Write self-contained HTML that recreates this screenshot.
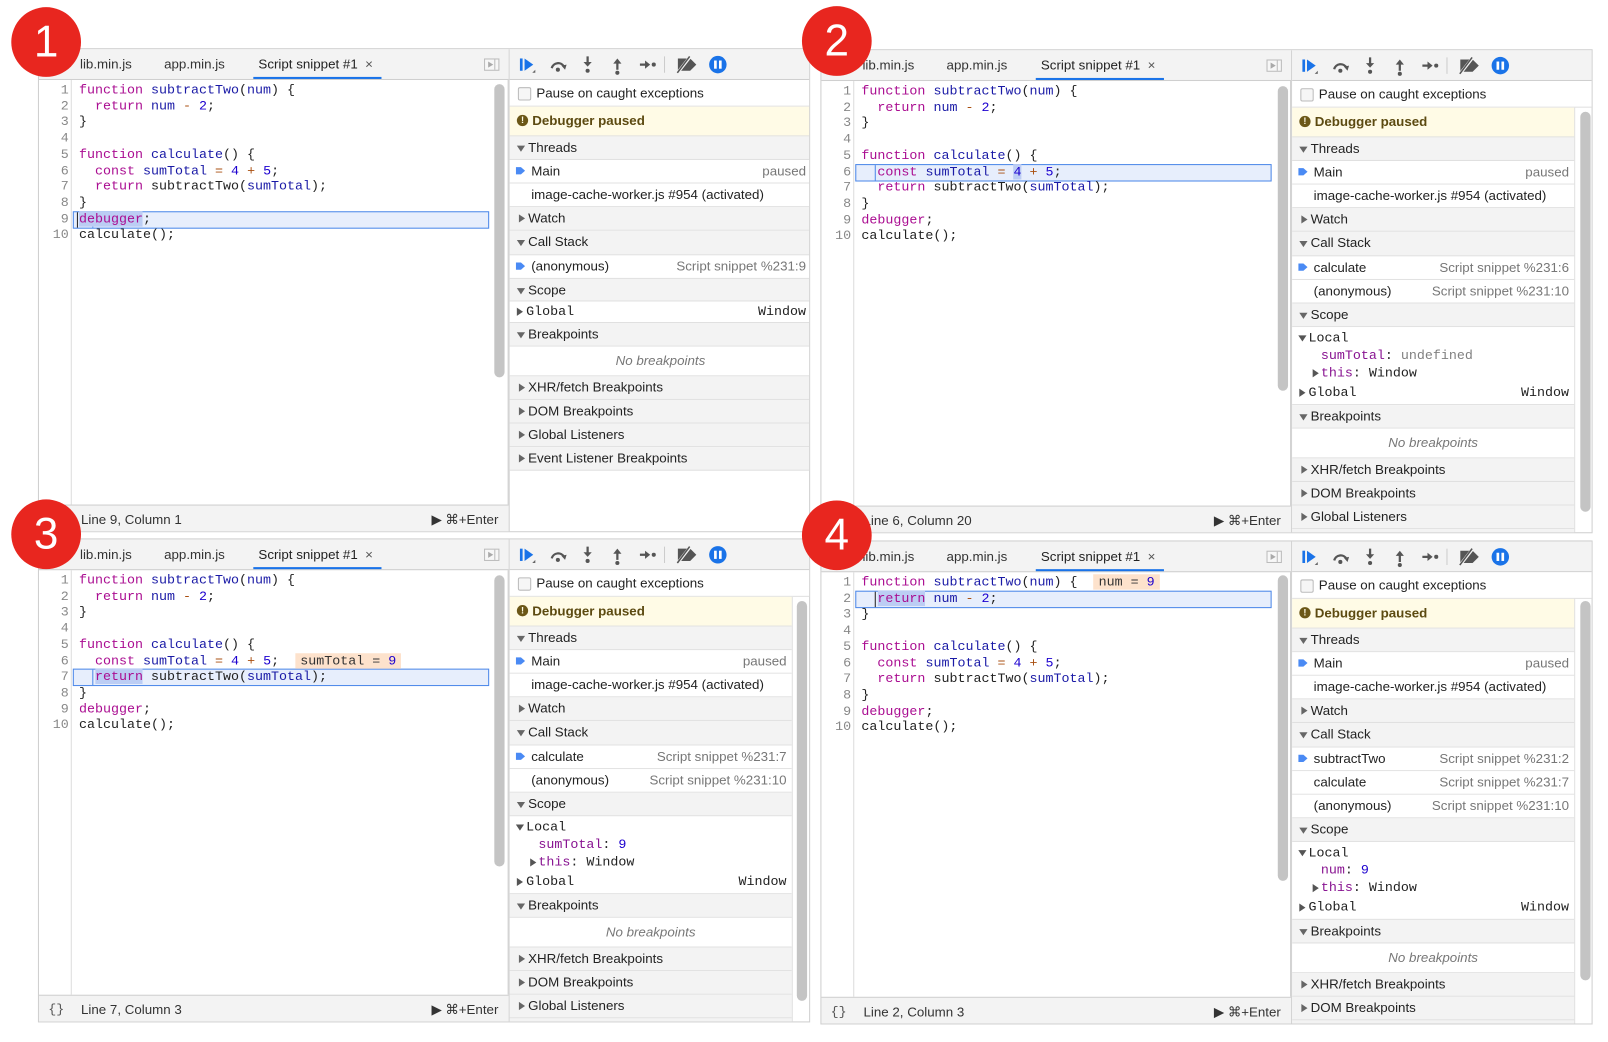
<!DOCTYPE html>
<html><head><meta charset="utf-8">
<style>
*{box-sizing:border-box;margin:0;padding:0}
html,body{width:1608px;height:1042px;overflow:hidden;background:#fff}
#w{position:absolute;left:0;top:0;width:1568px;height:1016px;transform:scale(1.02551);transform-origin:0 0;font-family:"Liberation Sans",Arial,sans-serif;font-size:13px;color:#222}
.p{position:absolute;width:753px;height:472px;border:1px solid #cfcfcf;background:#fff;overflow:hidden}
.tabs{position:absolute;left:0;top:0;width:458px;height:30px;background:#f3f3f3;border-bottom:1px solid #cfcfcf}
.tab{position:absolute;top:7px;color:#333;white-space:nowrap}
.tab.a{color:#222}
.ul{position:absolute;left:209px;top:27px;width:125px;height:2px;background:#1a73e8}
.tog{position:absolute;left:434px;top:9px;width:15px;height:12px;border:1px solid #bbb;background:#f7f7f7}
.tog:after{content:"";position:absolute;left:3px;top:2px;border-left:5px solid #aaa;border-top:3px solid transparent;border-bottom:3px solid transparent}
.tog:before{content:"";position:absolute;left:9px;top:0;width:1px;height:10px;background:#bbb}
.gut{position:absolute;left:0;top:30px;width:32px;height:414px;border-right:1px solid #ddd}
.ed{position:absolute;left:0;top:30px;width:458px;height:414px;border-right:1px solid #cfcfcf}
.ln{position:absolute;left:0;height:15.7px;width:456px;font-family:"Liberation Mono",monospace;font-size:13px;line-height:15.7px;white-space:pre;color:#222}
.ln b{font-weight:normal;position:absolute;left:0;width:29px;text-align:right;color:#888}
.ln span.c{position:absolute;left:39px}
.k{color:#aa0d91}.f{color:#1a1aa6}.n{color:#1c00cf}.o{color:#a94f10}
.hl{position:absolute;left:33px;width:406px;height:17px;background:#e7eefc;border:1px solid #4c88e9}
.hl i{position:absolute;top:0;width:1px;height:15px;background:#4c88e9}
.sel{background:#bccdf4}
.iv{background:#fde2cc;padding:0 5px;color:#333}
.sb{position:absolute;width:10px;background:#c4c4c4;border-radius:5px}
.st{position:absolute;left:0;top:444px;width:458px;height:28px;background:#f3f3f3;border-top:1px solid #cfcfcf;color:#333}
.st .br{position:absolute;left:9px;top:6px;font-family:"Liberation Mono",monospace;color:#555}
.st .t{position:absolute;left:41px;top:6px}
.st .r{position:absolute;right:10px;top:6px}
.side{position:absolute;left:458px;top:0;height:472px}
.tb{position:absolute;left:0;top:0;width:296px;height:30px;background:#f3f3f3;border-bottom:1px solid #cfcfcf}
.list{position:absolute;left:0;top:30px}
.row{position:relative;height:23px;line-height:22px;border-bottom:1px solid #e0e0e0;white-space:nowrap;background:#fff}
.h{background:#f3f3f3;padding-left:18px}
.h:before{content:"";position:absolute;left:7px;top:9px;border-top:6px solid #666;border-left:4px solid transparent;border-right:4px solid transparent}
.h.c:before{left:9px;top:7px;border-left:6px solid #666;border-top:4px solid transparent;border-bottom:4px solid transparent;border-right:0}
.it{padding-left:21px}
.it .rt{position:absolute;right:5px;top:0;color:#777}
.arr{position:absolute;left:6px;top:6px;width:9px;height:9px}
.chk{height:26px;line-height:25px;padding-left:26px;border-bottom:1px solid #e0e0e0}
.chk:before{content:"";position:absolute;left:8px;top:7px;width:11px;height:11px;border:1px solid #bbb;border-radius:2px;background:#f6f6f6}
.pz{height:29px;line-height:28px;background:#fffbe6;color:#5c4a11;font-weight:bold;padding-left:22px;border-bottom:1px solid #e0e0e0}
.pz:before{content:"!";position:absolute;left:7px;top:8px;width:11px;height:11px;border-radius:50%;background:#6b5717;color:#fffbe6;font-size:9px;line-height:11px;text-align:center}
.nb{height:29px;line-height:28px;text-align:center;font-style:italic;color:#777}
.mono{font-family:"Liberation Mono",monospace;font-size:13px}
.scope{position:relative;background:#fff;border-bottom:1px solid #e0e0e0;padding-top:2px}
.sl{position:relative;height:17px;line-height:17px;white-space:nowrap;font-family:"Liberation Mono",monospace}
.tr{position:absolute;border-left:6px solid #555;border-top:4px solid transparent;border-bottom:4px solid transparent}
.td{position:absolute;border-top:6px solid #555;border-left:4px solid transparent;border-right:4px solid transparent}
.m{color:#881391}.g{color:#808080}
.circ{position:absolute;width:68px;height:68px;border-radius:50%;background:#e8261f;color:#fff;font-size:43px;line-height:68px;text-align:center;z-index:5;font-family:"Liberation Sans",Arial,sans-serif}
</style></head><body><div id="w">

<!-- PANEL 1 -->
<div class="p" style="left:37px;top:47px">
 <div class="tabs"><span class="tab" style="left:40px">lib.min.js</span><span class="tab" style="left:122px">app.min.js</span><span class="tab a" style="left:214px">Script snippet #1 &nbsp;<span style="color:#555">×</span></span><div class="ul"></div><div class="tog"></div></div>
 <div class="ed"></div><div class="gut"></div>
 <div class="hl" style="top:158px"><i style="left:3px;background:#222"></i><i style="left:18px"></i></div>
 <div class="ln" style="top:32px"><b>1</b><span class="c"><span class="k">function</span> <span class="f">subtractTwo</span>(<span class="f">num</span>) {</span></div>
 <div class="ln" style="top:47.7px"><b>2</b><span class="c">  <span class="k">return</span> <span class="f">num</span> <span class="o">-</span> <span class="n">2</span>;</span></div>
 <div class="ln" style="top:63.4px"><b>3</b><span class="c">}</span></div>
 <div class="ln" style="top:79.1px"><b>4</b></div>
 <div class="ln" style="top:94.8px"><b>5</b><span class="c"><span class="k">function</span> <span class="f">calculate</span>() {</span></div>
 <div class="ln" style="top:110.5px"><b>6</b><span class="c">  <span class="k">const</span> <span class="f">sumTotal</span> <span class="o">=</span> <span class="n">4</span> <span class="o">+</span> <span class="n">5</span>;</span></div>
 <div class="ln" style="top:126.2px"><b>7</b><span class="c">  <span class="k">return</span> subtractTwo(<span class="f">sumTotal</span>);</span></div>
 <div class="ln" style="top:141.9px"><b>8</b><span class="c">}</span></div>
 <div class="ln" style="top:157.6px"><b>9</b><span class="c"><span class="k sel">debugger</span>;</span></div>
 <div class="ln" style="top:173.3px"><b>10</b><span class="c">calculate();</span></div>
 <div class="sb" style="left:444px;top:34px;height:286px"></div>
 <div class="st"><span class="br">{}</span><span class="t">Line 9, Column 1</span><span class="r">▶ ⌘+Enter</span></div>
 <div class="side" style="width:295px;border-left:1px solid #cfcfcf">
  <div class="tb"><svg width="296" height="30" viewBox="0 0 296 30"><g fill="#1a73e8"><rect x="10" y="9" width="2.6" height="12"/><polygon points="14.5,9 23,15 14.5,21"/></g><polygon points="22,23 25,20 25,23" fill="#666"/><path d="M41 18.5 A6.5 6.5 0 0 1 53 17" stroke="#555" stroke-width="2.2" fill="none"/><polygon points="50.5,16 55.5,15 54,20" fill="#555"/><circle cx="47" cy="20" r="2" fill="#555"/><path d="M76 7 V14" stroke="#555" stroke-width="2.2"/><polygon points="72,12.5 80,12.5 76,17" fill="#555"/><circle cx="76" cy="21" r="2" fill="#555"/><path d="M105 13 V20" stroke="#555" stroke-width="2.2"/><polygon points="101,14 109,14 105,9" fill="#555"/><circle cx="105" cy="23" r="2" fill="#555"/><path d="M127 15 H133" stroke="#555" stroke-width="2.2"/><polygon points="132,11 137,15 132,19" fill="#555"/><circle cx="140.5" cy="15" r="2" fill="#555"/><path d="M151 7 V23" stroke="#ccc"/><polygon points="164,9 176,9 182,15 176,21 164,21" fill="#555"/><path d="M163 24 L177 6" stroke="#f3f3f3" stroke-width="3"/><path d="M163.5 23 L175.5 7" stroke="#555" stroke-width="1.5"/><circle cx="203" cy="15" r="8.5" fill="#1a73e8"/><rect x="199.3" y="11" width="2.6" height="8" fill="#fff"/><rect x="204.1" y="11" width="2.6" height="8" fill="#fff"/></svg></div>
  <div class="list" style="width:294px">
   <div class="row chk">Pause on caught exceptions</div>
   <div class="row pz">Debugger paused</div>
   <div class="row h">Threads</div>
   <div class="row it"><svg class="arr" viewBox="0 0 9 9"><polygon points="0,1 5,1 9,4.5 5,8 0,8" fill="#4a8af4"/></svg>Main<span class="rt">paused</span></div>
   <div class="row it">image-cache-worker.js #954 (activated)</div>
   <div class="row h c">Watch</div>
   <div class="row h" style="height:24px">Call Stack</div>
   <div class="row it"><svg class="arr" viewBox="0 0 9 9"><polygon points="0,1 5,1 9,4.5 5,8 0,8" fill="#4a8af4"/></svg>(anonymous)<span class="rt">Script snippet %231:9</span></div>
   <div class="row h" style="height:22px">Scope</div>
   <div class="row mono" style="height:21px;line-height:20px;padding-left:16px"><span class="tr" style="left:7px;top:6px"></span>Global<span style="position:absolute;right:5px">Window</span></div>
   <div class="row h">Breakpoints</div>
   <div class="row nb">No breakpoints</div>
   <div class="row h c">XHR/fetch Breakpoints</div>
   <div class="row h c">DOM Breakpoints</div>
   <div class="row h c">Global Listeners</div>
   <div class="row h c">Event Listener Breakpoints</div>
  </div>
 </div>
</div>

<!-- PANEL 2 -->
<div class="p" style="left:800px;top:48px">
 <div class="tabs"><span class="tab" style="left:40px">lib.min.js</span><span class="tab" style="left:122px">app.min.js</span><span class="tab a" style="left:214px">Script snippet #1 &nbsp;<span style="color:#555">×</span></span><div class="ul"></div><div class="tog"></div></div>
 <div class="ed"></div><div class="gut"></div>
 <div class="hl" style="top:110.5px"><i style="left:18px"></i></div>
 <div class="ln" style="top:32px"><b>1</b><span class="c"><span class="k">function</span> <span class="f">subtractTwo</span>(<span class="f">num</span>) {</span></div>
 <div class="ln" style="top:47.7px"><b>2</b><span class="c">  <span class="k">return</span> <span class="f">num</span> <span class="o">-</span> <span class="n">2</span>;</span></div>
 <div class="ln" style="top:63.4px"><b>3</b><span class="c">}</span></div>
 <div class="ln" style="top:79.1px"><b>4</b></div>
 <div class="ln" style="top:94.8px"><b>5</b><span class="c"><span class="k">function</span> <span class="f">calculate</span>() {</span></div>
 <div class="ln" style="top:110.5px"><b>6</b><span class="c">  <span class="k">const</span> <span class="f">sumTotal</span> <span class="o">=</span> <span class="n sel">4</span> <span class="o">+</span> <span class="n">5</span>;</span></div>
 <div class="ln" style="top:126.2px"><b>7</b><span class="c">  <span class="k">return</span> subtractTwo(<span class="f">sumTotal</span>);</span></div>
 <div class="ln" style="top:141.9px"><b>8</b><span class="c">}</span></div>
 <div class="ln" style="top:157.6px"><b>9</b><span class="c"><span class="k">debugger</span>;</span></div>
 <div class="ln" style="top:173.3px"><b>10</b><span class="c">calculate();</span></div>
 <div class="sb" style="left:445px;top:35px;height:297px"></div>
 <div class="st"><span class="br">{}</span><span class="t">Line 6, Column 20</span><span class="r">▶ ⌘+Enter</span></div>
 <div class="side" style="width:295px;border-left:1px solid #cfcfcf">
  <div class="tb"><svg width="296" height="30" viewBox="0 0 296 30"><g fill="#1a73e8"><rect x="10" y="9" width="2.6" height="12"/><polygon points="14.5,9 23,15 14.5,21"/></g><polygon points="22,23 25,20 25,23" fill="#666"/><path d="M41 18.5 A6.5 6.5 0 0 1 53 17" stroke="#555" stroke-width="2.2" fill="none"/><polygon points="50.5,16 55.5,15 54,20" fill="#555"/><circle cx="47" cy="20" r="2" fill="#555"/><path d="M76 7 V14" stroke="#555" stroke-width="2.2"/><polygon points="72,12.5 80,12.5 76,17" fill="#555"/><circle cx="76" cy="21" r="2" fill="#555"/><path d="M105 13 V20" stroke="#555" stroke-width="2.2"/><polygon points="101,14 109,14 105,9" fill="#555"/><circle cx="105" cy="23" r="2" fill="#555"/><path d="M127 15 H133" stroke="#555" stroke-width="2.2"/><polygon points="132,11 137,15 132,19" fill="#555"/><circle cx="140.5" cy="15" r="2" fill="#555"/><path d="M151 7 V23" stroke="#ccc"/><polygon points="164,9 176,9 182,15 176,21 164,21" fill="#555"/><path d="M163 24 L177 6" stroke="#f3f3f3" stroke-width="3"/><path d="M163.5 23 L175.5 7" stroke="#555" stroke-width="1.5"/><circle cx="203" cy="15" r="8.5" fill="#1a73e8"/><rect x="199.3" y="11" width="2.6" height="8" fill="#fff"/><rect x="204.1" y="11" width="2.6" height="8" fill="#fff"/></svg></div>
  <div class="chk row" style="position:absolute;top:30px;width:294px">Pause on caught exceptions</div>
  <div class="list" style="top:56px;width:276px;border-right:1px solid #ddd">
   <div class="row pz">Debugger paused</div>
   <div class="row h">Threads</div>
   <div class="row it"><svg class="arr" viewBox="0 0 9 9"><polygon points="0,1 5,1 9,4.5 5,8 0,8" fill="#4a8af4"/></svg>Main<span class="rt">paused</span></div>
   <div class="row it">image-cache-worker.js #954 (activated)</div>
   <div class="row h c">Watch</div>
   <div class="row h" style="height:24px">Call Stack</div>
   <div class="row it"><svg class="arr" viewBox="0 0 9 9"><polygon points="0,1 5,1 9,4.5 5,8 0,8" fill="#4a8af4"/></svg>calculate<span class="rt">Script snippet %231:6</span></div>
   <div class="row it">(anonymous)<span class="rt">Script snippet %231:10</span></div>
   <div class="row h">Scope</div>
   <div class="scope">
    <div class="sl" style="padding-left:16px"><span class="td" style="left:6px;top:6px"></span>Local</div>
    <div class="sl" style="padding-left:28px"><span class="m">sumTotal</span>: <span class="g">undefined</span></div>
    <div class="sl" style="padding-left:28px"><span class="tr" style="left:20px;top:5px"></span><span class="m">this</span>: Window</div>
    <div class="sl" style="padding-left:16px;height:22px;line-height:22px"><span class="tr" style="left:7px;top:7px"></span>Global<span style="position:absolute;right:5px">Window</span></div>
   </div>
   <div class="row h">Breakpoints</div>
   <div class="row nb">No breakpoints</div>
   <div class="row h c">XHR/fetch Breakpoints</div>
   <div class="row h c">DOM Breakpoints</div>
   <div class="row h c">Global Listeners</div>
   <div class="row h c">Event Listener Breakpoints</div>
  </div>
  <div class="sb" style="left:281px;top:60px;height:390px"></div>
 </div>
</div>

<!-- PANEL 3 -->
<div class="p" style="left:37px;top:525px">
 <div class="tabs"><span class="tab" style="left:40px">lib.min.js</span><span class="tab" style="left:122px">app.min.js</span><span class="tab a" style="left:214px">Script snippet #1 &nbsp;<span style="color:#555">×</span></span><div class="ul"></div><div class="tog"></div></div>
 <div class="ed"></div><div class="gut"></div>
 <div class="hl" style="top:126.2px"><i style="left:18px"></i></div>
 <div class="ln" style="top:32px"><b>1</b><span class="c"><span class="k">function</span> <span class="f">subtractTwo</span>(<span class="f">num</span>) {</span></div>
 <div class="ln" style="top:47.7px"><b>2</b><span class="c">  <span class="k">return</span> <span class="f">num</span> <span class="o">-</span> <span class="n">2</span>;</span></div>
 <div class="ln" style="top:63.4px"><b>3</b><span class="c">}</span></div>
 <div class="ln" style="top:79.1px"><b>4</b></div>
 <div class="ln" style="top:94.8px"><b>5</b><span class="c"><span class="k">function</span> <span class="f">calculate</span>() {</span></div>
 <div class="ln" style="top:110.5px"><b>6</b><span class="c">  <span class="k">const</span> <span class="f">sumTotal</span> <span class="o">=</span> <span class="n">4</span> <span class="o">+</span> <span class="n">5</span>;  <span class="iv">sumTotal = <span class="n">9</span></span></span></div>
 <div class="ln" style="top:126.2px"><b>7</b><span class="c">  <span class="k sel">return</span> subtractTwo(<span class="f">sumTotal</span>);</span></div>
 <div class="ln" style="top:141.9px"><b>8</b><span class="c">}</span></div>
 <div class="ln" style="top:157.6px"><b>9</b><span class="c"><span class="k">debugger</span>;</span></div>
 <div class="ln" style="top:173.3px"><b>10</b><span class="c">calculate();</span></div>
 <div class="sb" style="left:444px;top:35px;height:284px"></div>
 <div class="st"><span class="br">{}</span><span class="t">Line 7, Column 3</span><span class="r">▶ ⌘+Enter</span></div>
 <div class="side" style="width:295px;border-left:1px solid #cfcfcf">
  <div class="tb"><svg width="296" height="30" viewBox="0 0 296 30"><g fill="#1a73e8"><rect x="10" y="9" width="2.6" height="12"/><polygon points="14.5,9 23,15 14.5,21"/></g><polygon points="22,23 25,20 25,23" fill="#666"/><path d="M41 18.5 A6.5 6.5 0 0 1 53 17" stroke="#555" stroke-width="2.2" fill="none"/><polygon points="50.5,16 55.5,15 54,20" fill="#555"/><circle cx="47" cy="20" r="2" fill="#555"/><path d="M76 7 V14" stroke="#555" stroke-width="2.2"/><polygon points="72,12.5 80,12.5 76,17" fill="#555"/><circle cx="76" cy="21" r="2" fill="#555"/><path d="M105 13 V20" stroke="#555" stroke-width="2.2"/><polygon points="101,14 109,14 105,9" fill="#555"/><circle cx="105" cy="23" r="2" fill="#555"/><path d="M127 15 H133" stroke="#555" stroke-width="2.2"/><polygon points="132,11 137,15 132,19" fill="#555"/><circle cx="140.5" cy="15" r="2" fill="#555"/><path d="M151 7 V23" stroke="#ccc"/><polygon points="164,9 176,9 182,15 176,21 164,21" fill="#555"/><path d="M163 24 L177 6" stroke="#f3f3f3" stroke-width="3"/><path d="M163.5 23 L175.5 7" stroke="#555" stroke-width="1.5"/><circle cx="203" cy="15" r="8.5" fill="#1a73e8"/><rect x="199.3" y="11" width="2.6" height="8" fill="#fff"/><rect x="204.1" y="11" width="2.6" height="8" fill="#fff"/></svg></div>
  <div class="chk row" style="position:absolute;top:30px;width:294px">Pause on caught exceptions</div>
  <div class="list" style="top:56px;width:276px;border-right:1px solid #ddd">
   <div class="row pz">Debugger paused</div>
   <div class="row h">Threads</div>
   <div class="row it"><svg class="arr" viewBox="0 0 9 9"><polygon points="0,1 5,1 9,4.5 5,8 0,8" fill="#4a8af4"/></svg>Main<span class="rt">paused</span></div>
   <div class="row it">image-cache-worker.js #954 (activated)</div>
   <div class="row h c">Watch</div>
   <div class="row h" style="height:24px">Call Stack</div>
   <div class="row it"><svg class="arr" viewBox="0 0 9 9"><polygon points="0,1 5,1 9,4.5 5,8 0,8" fill="#4a8af4"/></svg>calculate<span class="rt">Script snippet %231:7</span></div>
   <div class="row it">(anonymous)<span class="rt">Script snippet %231:10</span></div>
   <div class="row h">Scope</div>
   <div class="scope">
    <div class="sl" style="padding-left:16px"><span class="td" style="left:6px;top:6px"></span>Local</div>
    <div class="sl" style="padding-left:28px"><span class="m">sumTotal</span>: <span class="n">9</span></div>
    <div class="sl" style="padding-left:28px"><span class="tr" style="left:20px;top:5px"></span><span class="m">this</span>: Window</div>
    <div class="sl" style="padding-left:16px;height:22px;line-height:22px"><span class="tr" style="left:7px;top:7px"></span>Global<span style="position:absolute;right:5px">Window</span></div>
   </div>
   <div class="row h">Breakpoints</div>
   <div class="row nb">No breakpoints</div>
   <div class="row h c">XHR/fetch Breakpoints</div>
   <div class="row h c">DOM Breakpoints</div>
   <div class="row h c">Global Listeners</div>
   <div class="row h c">Event Listener Breakpoints</div>
  </div>
  <div class="sb" style="left:280px;top:60px;height:390px"></div>
 </div>
</div>

<!-- PANEL 4 -->
<div class="p" style="left:800px;top:527px">
 <div class="tabs"><span class="tab" style="left:40px">lib.min.js</span><span class="tab" style="left:122px">app.min.js</span><span class="tab a" style="left:214px">Script snippet #1 &nbsp;<span style="color:#555">×</span></span><div class="ul"></div><div class="tog"></div></div>
 <div class="ed"></div><div class="gut"></div>
 <div class="hl" style="top:47.7px"><i style="left:18px;background:#222"></i></div>
 <div class="ln" style="top:32px"><b>1</b><span class="c"><span class="k">function</span> <span class="f">subtractTwo</span>(<span class="f">num</span>) {  <span class="iv">num = <span class="n">9</span></span></span></div>
 <div class="ln" style="top:47.7px"><b>2</b><span class="c">  <span class="k sel">return</span> <span class="f">num</span> <span class="o">-</span> <span class="n">2</span>;</span></div>
 <div class="ln" style="top:63.4px"><b>3</b><span class="c">}</span></div>
 <div class="ln" style="top:79.1px"><b>4</b></div>
 <div class="ln" style="top:94.8px"><b>5</b><span class="c"><span class="k">function</span> <span class="f">calculate</span>() {</span></div>
 <div class="ln" style="top:110.5px"><b>6</b><span class="c">  <span class="k">const</span> <span class="f">sumTotal</span> <span class="o">=</span> <span class="n">4</span> <span class="o">+</span> <span class="n">5</span>;</span></div>
 <div class="ln" style="top:126.2px"><b>7</b><span class="c">  <span class="k">return</span> subtractTwo(<span class="f">sumTotal</span>);</span></div>
 <div class="ln" style="top:141.9px"><b>8</b><span class="c">}</span></div>
 <div class="ln" style="top:157.6px"><b>9</b><span class="c"><span class="k">debugger</span>;</span></div>
 <div class="ln" style="top:173.3px"><b>10</b><span class="c">calculate();</span></div>
 <div class="sb" style="left:445px;top:33px;height:298px"></div>
 <div class="st"><span class="br">{}</span><span class="t">Line 2, Column 3</span><span class="r">▶ ⌘+Enter</span></div>
 <div class="side" style="width:295px;border-left:1px solid #cfcfcf">
  <div class="tb"><svg width="296" height="30" viewBox="0 0 296 30"><g fill="#1a73e8"><rect x="10" y="9" width="2.6" height="12"/><polygon points="14.5,9 23,15 14.5,21"/></g><polygon points="22,23 25,20 25,23" fill="#666"/><path d="M41 18.5 A6.5 6.5 0 0 1 53 17" stroke="#555" stroke-width="2.2" fill="none"/><polygon points="50.5,16 55.5,15 54,20" fill="#555"/><circle cx="47" cy="20" r="2" fill="#555"/><path d="M76 7 V14" stroke="#555" stroke-width="2.2"/><polygon points="72,12.5 80,12.5 76,17" fill="#555"/><circle cx="76" cy="21" r="2" fill="#555"/><path d="M105 13 V20" stroke="#555" stroke-width="2.2"/><polygon points="101,14 109,14 105,9" fill="#555"/><circle cx="105" cy="23" r="2" fill="#555"/><path d="M127 15 H133" stroke="#555" stroke-width="2.2"/><polygon points="132,11 137,15 132,19" fill="#555"/><circle cx="140.5" cy="15" r="2" fill="#555"/><path d="M151 7 V23" stroke="#ccc"/><polygon points="164,9 176,9 182,15 176,21 164,21" fill="#555"/><path d="M163 24 L177 6" stroke="#f3f3f3" stroke-width="3"/><path d="M163.5 23 L175.5 7" stroke="#555" stroke-width="1.5"/><circle cx="203" cy="15" r="8.5" fill="#1a73e8"/><rect x="199.3" y="11" width="2.6" height="8" fill="#fff"/><rect x="204.1" y="11" width="2.6" height="8" fill="#fff"/></svg></div>
  <div class="chk row" style="position:absolute;top:30px;width:294px">Pause on caught exceptions</div>
  <div class="list" style="top:56px;width:276px;border-right:1px solid #ddd">
   <div class="row pz">Debugger paused</div>
   <div class="row h">Threads</div>
   <div class="row it"><svg class="arr" viewBox="0 0 9 9"><polygon points="0,1 5,1 9,4.5 5,8 0,8" fill="#4a8af4"/></svg>Main<span class="rt">paused</span></div>
   <div class="row it">image-cache-worker.js #954 (activated)</div>
   <div class="row h c">Watch</div>
   <div class="row h" style="height:24px">Call Stack</div>
   <div class="row it"><svg class="arr" viewBox="0 0 9 9"><polygon points="0,1 5,1 9,4.5 5,8 0,8" fill="#4a8af4"/></svg>subtractTwo<span class="rt">Script snippet %231:2</span></div>
   <div class="row it">calculate<span class="rt">Script snippet %231:7</span></div>
   <div class="row it">(anonymous)<span class="rt">Script snippet %231:10</span></div>
   <div class="row h">Scope</div>
   <div class="scope">
    <div class="sl" style="padding-left:16px"><span class="td" style="left:6px;top:6px"></span>Local</div>
    <div class="sl" style="padding-left:28px"><span class="m">num</span>: <span class="n">9</span></div>
    <div class="sl" style="padding-left:28px"><span class="tr" style="left:20px;top:5px"></span><span class="m">this</span>: Window</div>
    <div class="sl" style="padding-left:16px;height:22px;line-height:22px"><span class="tr" style="left:7px;top:7px"></span>Global<span style="position:absolute;right:5px">Window</span></div>
   </div>
   <div class="row h">Breakpoints</div>
   <div class="row nb">No breakpoints</div>
   <div class="row h c">XHR/fetch Breakpoints</div>
   <div class="row h c">DOM Breakpoints</div>
   <div class="row h c">Global Listeners</div>
  </div>
  <div class="sb" style="left:281px;top:58px;height:370px"></div>
 </div>
</div>

<div class="circ" style="left:11px;top:7px">1</div>
<div class="circ" style="left:782px;top:6px">2</div>
<div class="circ" style="left:11px;top:487px">3</div>
<div class="circ" style="left:782px;top:488px">4</div>
</div></body></html>
